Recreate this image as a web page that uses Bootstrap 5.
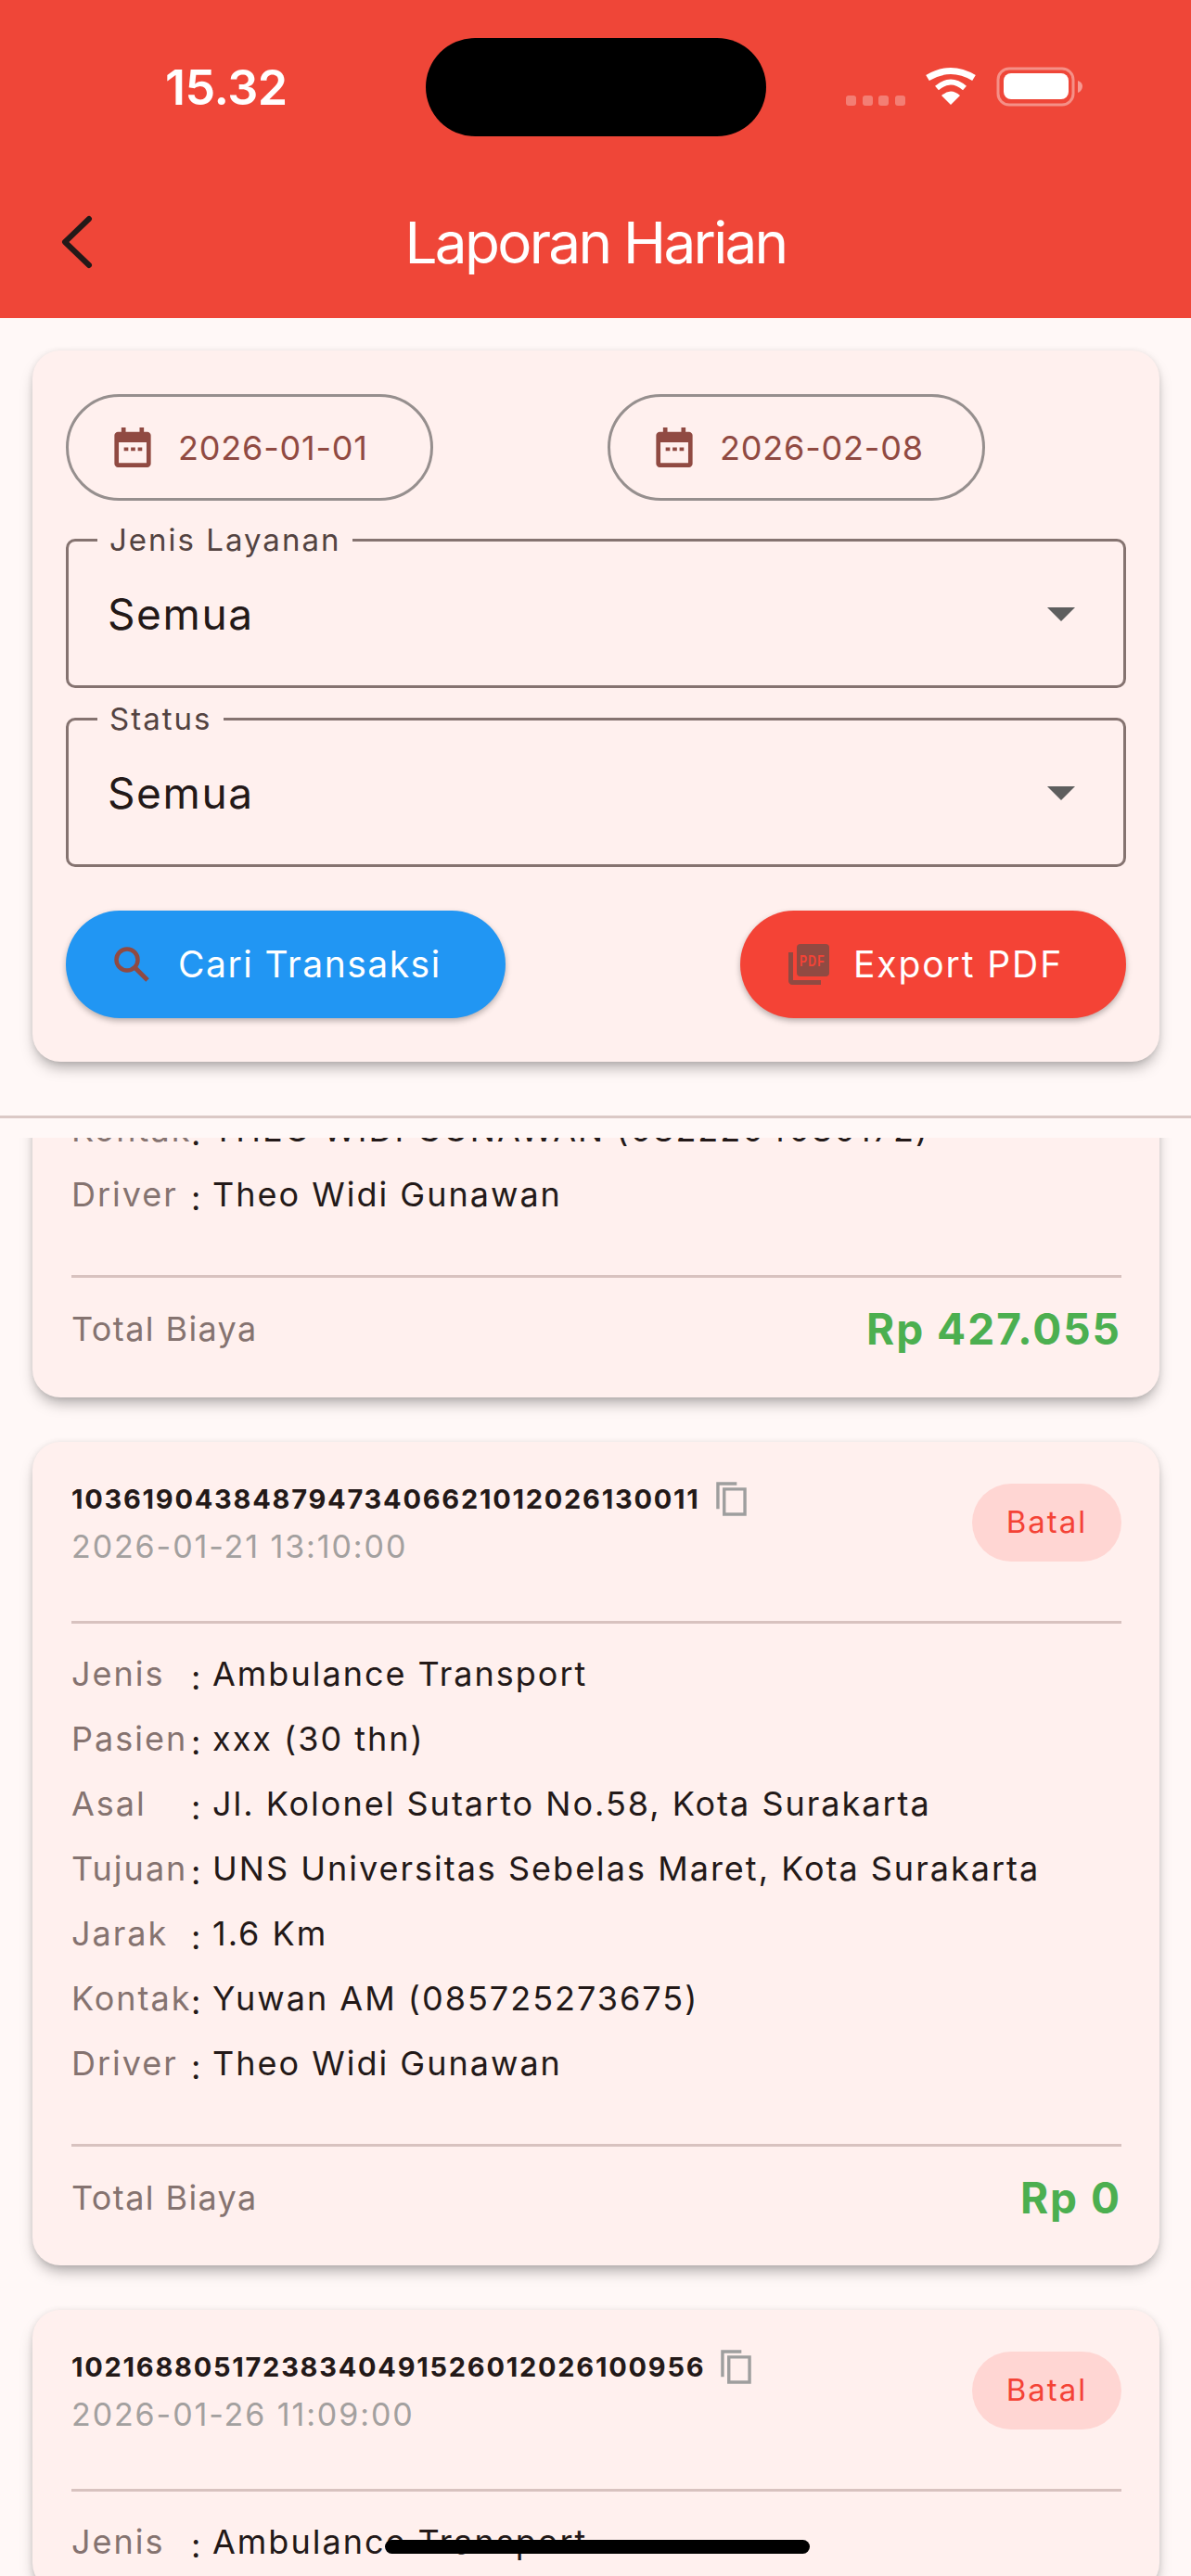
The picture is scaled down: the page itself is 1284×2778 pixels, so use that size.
<!DOCTYPE html>
<html lang="en">
<head>
  <meta charset="UTF-8">
  <title>Laporan Harian</title>
  <link href="https://cdn.jsdelivr.net/npm/bootstrap@5.3.3/dist/css/bootstrap.min.css" rel="stylesheet">
  <style>
    body { background: #fff8f7; font-family: "Inter", "Liberation Sans", sans-serif; color: #231918; }
    .phone { width: 1284px; height: 2778px; overflow: hidden; position: relative; background: #fff8f7; }

    /* app bar + status bar */
    .appbar { height: 343px; background: #ef4638; color: #fff; }
    .statusline { height: 168px; padding: 69px 0 0 178px; }
    .clock { font-size: 52px; font-weight: 600; line-height: 1; letter-spacing: -.5px; width: 140px; }
    .island { position: absolute; left: 459px; top: 41px; width: 367px; height: 106px; border-radius: 53px; background: #000; }
    .status-icons { position: absolute; left: 908px; top: 66px; }
    .titleline { height: 175px; position: relative; }
    .titleline h1 { font-size: 62px; font-weight: 400; letter-spacing: -2.7px; margin: 0; line-height: 1; padding-top: 63px; }
    .back-btn { position: absolute; left: 63px; top: 63px; }

    /* filter panel */
    .panel { margin: 35px 34px 0 35px; height: 767px; padding: 47px 36px 0 36px; }
    .tile { background: #fff0ee; border-radius: 30px; box-shadow: 0 9px 16px -4px rgba(0,0,0,.35), 0 0 6px rgba(0,0,0,.08); }
    .date-pill { height: 115px; border: 3px solid #968f8e; border-radius: 58px; color: #904a42; font-size: 36px; letter-spacing: .8px; padding-left: 49px; gap: 29px; }
    .pill-a { width: 396px; }
    .pill-b { width: 407px; margin-left: 188px; }
    .drop { height: 161px; border: 3px solid #857370; border-radius: 10px; margin-top: 41px; padding: 2px 52px 0 42px; font-size: 46px; letter-spacing: 1.6px; position: relative; }
    .drop + .drop { margin-top: 32px; }
    .drop-label { position: absolute; left: 31px; top: -22px; background: #fff0ee; padding: 0 13px; font-size: 33px; line-height: 40px; letter-spacing: 2px; color: #534341; }
    .caret-down { width: 0; height: 0; border-left: 15px solid transparent; border-right: 15px solid transparent; border-top: 15px solid #5e5e5e; }
    .btn-row { margin-top: 47px; }
    .act-btn { height: 116px; border-radius: 58px; color: #fff; font-size: 39px; box-shadow: 0 3px 6px rgba(0,0,0,.28); }
    .act-blue { width: 474px; background: #2196f3; padding-left: 52px; gap: 31px; letter-spacing: 1.5px; }
    .act-red { width: 416px; background: #f44336; padding-left: 52px; gap: 26px; letter-spacing: 1.9px; }

    .rule { height: 3px; background: #dbc9c6; margin-top: 58px; }

    /* transaction list, scrolled */
    .scroller { position: absolute; left: 0; right: 0; top: 1227px; bottom: 0; overflow: hidden; }
    .scroll-inner { margin-top: -44px; padding: 0 34px 0 35px; }
    .trx { padding: 43px 41px 18px 42px; margin-bottom: 48px; }
    .trx-first { padding-top: 0; padding-bottom: 19px; }
    .trx-id { font-size: 29px; font-weight: 700; line-height: 36px; letter-spacing: 1.75px; gap: 17px; }
    .trx-date { font-size: 34px; line-height: 40px; letter-spacing: 1.9px; color: #a3a09f; margin-top: 13px; }
    .badge-batal { width: 161px; height: 84px; margin-top: 2px; border-radius: 42px; background: #ffd6d3; color: #f44336; font-size: 33px; letter-spacing: 2px; }
    .line { height: 3px; background: #d8c2bf; margin-top: 52px; }
    .line-head { margin-top: 60px; }
    .info-rows { padding-top: 19px; }
    .info-row { height: 70px; font-size: 36px; letter-spacing: 2px; white-space: nowrap; }
    .info-key { width: 127px; color: #857370; flex: none; }
    .info-colon { width: 25px; flex: none; padding: 8px 0 0 2px; }
    .total-row { height: 110px; font-size: 36px; color: #857370; letter-spacing: 1.4px; }
    .total-val { font-size: 46px; font-weight: 700; color: #4caf50; letter-spacing: 2px; }

    .home-bar { position: absolute; left: 415px; top: 2739px; width: 458px; height: 15px; border-radius: 8px; background: #000; }
  </style>
</head>
<body>
<div class="phone">

  <div class="appbar">
    <div class="statusline"><div class="clock">15.32</div></div>
    <div class="titleline text-center">
      <svg class="back-btn" width="40" height="60" viewBox="0 0 40 60"><path d="M33 5 L7 30 L33 55" fill="none" stroke="#231918" stroke-width="6" stroke-linecap="round" stroke-linejoin="round"/></svg>
      <h1>Laporan Harian</h1>
    </div>
  </div>
  <div class="island"></div>
  <svg class="status-icons" width="260" height="50" viewBox="0 0 260 50">
    <g fill="#fff" opacity=".3">
      <rect x="4" y="37" width="11" height="11" rx="3"/><rect x="22" y="37" width="11" height="11" rx="3"/>
      <rect x="39" y="37" width="11" height="11" rx="3"/><rect x="57" y="37" width="11" height="11" rx="3"/>
    </g>
    <path d="M92 18 Q117 3 142 18" fill="none" stroke="#fff" stroke-width="7"/>
    <path d="M102 29 Q117 16 132 29" fill="none" stroke="#fff" stroke-width="6"/>
    <path d="M117 47 L107 37 Q117 28 127 37 Z" fill="#fff"/>
    <rect x="168" y="8" width="81" height="39" rx="12" fill="none" stroke="#fff" stroke-opacity=".4" stroke-width="3"/>
    <rect x="174" y="13" width="70" height="28" rx="8" fill="#fff"/>
    <path d="M254 21 C257 22 259 24 259 27 C259 30 257 33 254 34 Z" fill="#fff" opacity=".45"/>
  </svg>

  <div class="panel tile">
    <div class="d-flex">
      <div class="date-pill pill-a d-flex align-items-center">
        <svg width="40" height="43" viewBox="0 0 42 46"><path fill="#904a42" d="M8 0h5v5h16V0h5v5h4c2 0 4 2 4 4v33c0 2-2 4-4 4H4c-2 0-4-2-4-4V9c0-2 2-4 4-4h4zM5 17v24h32V17zm6 6h5v4h-5zm8 0h5v4h-5zm8 0h5v4h-5z" fill-rule="evenodd"/></svg>
        <span>2026-01-01</span>
      </div>
      <div class="date-pill pill-b d-flex align-items-center">
        <svg width="40" height="43" viewBox="0 0 42 46"><path fill="#904a42" d="M8 0h5v5h16V0h5v5h4c2 0 4 2 4 4v33c0 2-2 4-4 4H4c-2 0-4-2-4-4V9c0-2 2-4 4-4h4zM5 17v24h32V17zm6 6h5v4h-5zm8 0h5v4h-5zm8 0h5v4h-5z" fill-rule="evenodd"/></svg>
        <span>2026-02-08</span>
      </div>
    </div>

    <div class="drop d-flex align-items-center justify-content-between">
      <span class="drop-label">Jenis Layanan</span>
      <span>Semua</span>
      <span class="caret-down"></span>
    </div>
    <div class="drop d-flex align-items-center justify-content-between">
      <span class="drop-label">Status</span>
      <span>Semua</span>
      <span class="caret-down"></span>
    </div>

    <div class="btn-row d-flex justify-content-between">
      <div class="act-btn act-blue d-flex align-items-center">
        <svg width="38" height="38" viewBox="0 0 38 38"><circle cx="14" cy="14" r="11.500" fill="none" stroke="#904a42" stroke-width="4.500"/><path d="M22 22 L36 36" stroke="#904a42" stroke-width="5" fill="none"/></svg>
        <span>Cari Transaksi</span>
      </div>
      <div class="act-btn act-red d-flex align-items-center">
        <svg width="44" height="44" viewBox="0 0 44 44"><path fill="#904a42" d="M0 9h5v30h30v5H4c-2 0-4-2-4-4z"/><rect x="9" y="0" width="35" height="35" rx="4" fill="#904a42"/><text x="12" y="24" font-size="17" font-weight="700" fill="#f44336" textLength="28" lengthAdjust="spacingAndGlyphs" font-family="Liberation Sans, sans-serif">PDF</text></svg>
        <span>Export PDF</span>
      </div>
    </div>
  </div>

  <div class="rule"></div>

  <div class="scroller">
    <div class="scroll-inner">

      <div class="trx trx-first tile">
        <div class="info-row d-flex align-items-center">
          <span class="info-key">Kontak</span><span class="info-colon">:</span><span>THEO WIDI GUNAWAN (0822204080172)</span>
        </div>
        <div class="info-row d-flex align-items-center">
          <span class="info-key">Driver</span><span class="info-colon">:</span><span>Theo Widi Gunawan</span>
        </div>
        <div class="line"></div>
        <div class="total-row d-flex align-items-center justify-content-between">
          <span>Total Biaya</span><span class="total-val">Rp 427.055</span>
        </div>
      </div>

      <div class="trx tile">
        <div class="d-flex justify-content-between">
          <div>
            <div class="trx-id d-flex align-items-center">
              <span>10361904384879473406621012026130011</span>
              <svg width="33" height="37" viewBox="0 0 34 38"><path fill="none" stroke="#9e9e9e" stroke-width="3.500" d="M2 30V2h21M9 8h23v28H9z"/></svg>
            </div>
            <div class="trx-date">2026-01-21 13:10:00</div>
          </div>
          <div class="badge-batal d-flex align-items-center justify-content-center">Batal</div>
        </div>
        <div class="line line-head"></div>
        <div class="info-rows">
          <div class="info-row d-flex align-items-center"><span class="info-key">Jenis</span><span class="info-colon">:</span><span>Ambulance Transport</span></div>
          <div class="info-row d-flex align-items-center"><span class="info-key">Pasien</span><span class="info-colon">:</span><span>xxx (30 thn)</span></div>
          <div class="info-row d-flex align-items-center"><span class="info-key">Asal</span><span class="info-colon">:</span><span>Jl. Kolonel Sutarto No.58, Kota Surakarta</span></div>
          <div class="info-row d-flex align-items-center"><span class="info-key">Tujuan</span><span class="info-colon">:</span><span>UNS Universitas Sebelas Maret, Kota Surakarta</span></div>
          <div class="info-row d-flex align-items-center"><span class="info-key">Jarak</span><span class="info-colon">:</span><span>1.6 Km</span></div>
          <div class="info-row d-flex align-items-center"><span class="info-key">Kontak</span><span class="info-colon">:</span><span>Yuwan AM (085725273675)</span></div>
          <div class="info-row d-flex align-items-center"><span class="info-key">Driver</span><span class="info-colon">:</span><span>Theo Widi Gunawan</span></div>
        </div>
        <div class="line"></div>
        <div class="total-row d-flex align-items-center justify-content-between">
          <span>Total Biaya</span><span class="total-val">Rp 0</span>
        </div>
      </div>

      <div class="trx tile">
        <div class="d-flex justify-content-between">
          <div>
            <div class="trx-id d-flex align-items-center">
              <span>10216880517238340491526012026100956</span>
              <svg width="33" height="37" viewBox="0 0 34 38"><path fill="none" stroke="#9e9e9e" stroke-width="3.500" d="M2 30V2h21M9 8h23v28H9z"/></svg>
            </div>
            <div class="trx-date">2026-01-26 11:09:00</div>
          </div>
          <div class="badge-batal d-flex align-items-center justify-content-center">Batal</div>
        </div>
        <div class="line line-head"></div>
        <div class="info-rows">
          <div class="info-row d-flex align-items-center"><span class="info-key">Jenis</span><span class="info-colon">:</span><span>Ambulance Transport</span></div>
        </div>
      </div>

    </div>
  </div>

  <div class="home-bar"></div>
</div>
<script src="https://cdn.jsdelivr.net/npm/bootstrap@5.3.3/dist/js/bootstrap.bundle.min.js"></script>
</body>
</html>
